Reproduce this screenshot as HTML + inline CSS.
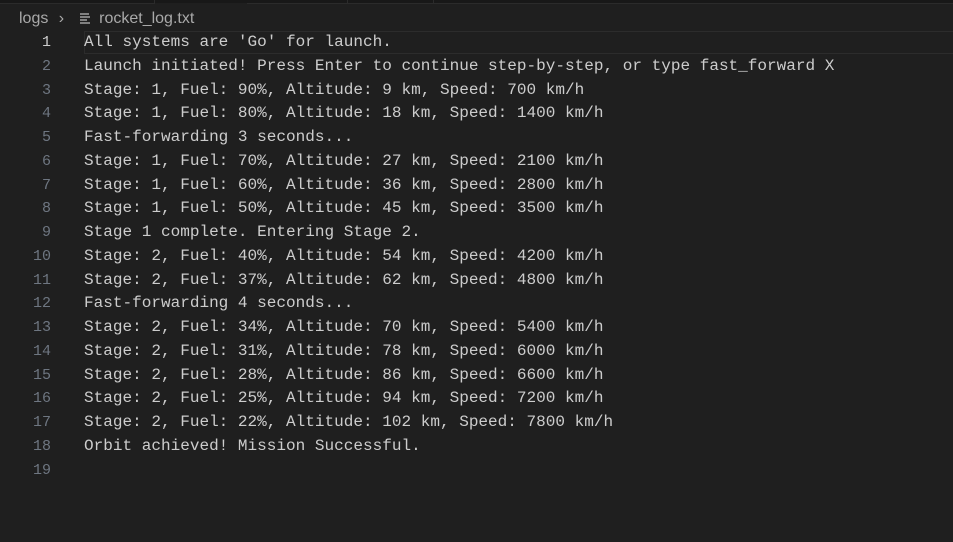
<!DOCTYPE html>
<html><head><style>
body{margin:0;width:953px;height:542px;background:#1f1f1f;overflow:hidden;position:relative;font-family:"Liberation Sans",sans-serif}
.top{position:absolute;left:0;top:0;width:953px;height:3px;background:#181818}
.tb{position:absolute;top:0;height:3px;border-right:1px solid #2b2b2b;border-bottom:1px solid #2b2b2b}
.crumb{position:absolute;top:10px;left:19px;font-size:16px;color:#a9a9a9;white-space:nowrap}
.hl{position:absolute;left:84px;top:31px;width:880px;height:23px;border:1px solid #2c2c2c;box-sizing:border-box}
.ln{position:absolute;left:0;width:51px;text-align:right;color:#6e7681;font-family:"Liberation Mono",monospace;font-size:15px}
.code{position:absolute;left:84px;color:#cccccc;font-family:"Liberation Mono",monospace;font-size:16.05px;white-space:pre}
</style></head><body>
<div class="top"></div>
<div class="tb" style="left:0;width:154px"></div>
<div class="tb" style="left:247px;width:100px"></div>
<div class="tb" style="left:348px;width:85px"></div>
<div class="tb" style="left:434px;width:519px"></div>
<div class="crumb">logs <span style="color:#a9a9a9;margin:0 15px 0 6px">&#x203A;</span><svg width="12" height="12" viewBox="0 0 12 12" style="vertical-align:-1px;margin-right:8px"><path d="M1 2h9M1 5h10M1 8h7M1 11h10" stroke="#bbb" stroke-width="1.2"/></svg>rocket_log.txt</div>
<div class="hl"></div>
<div id="c"></div>
<script>
var L=["All systems are 'Go' for launch.","Launch initiated! Press Enter to continue step-by-step, or type fast_forward X","Stage: 1, Fuel: 90%, Altitude: 9 km, Speed: 700 km/h","Stage: 1, Fuel: 80%, Altitude: 18 km, Speed: 1400 km/h","Fast-forwarding 3 seconds...","Stage: 1, Fuel: 70%, Altitude: 27 km, Speed: 2100 km/h","Stage: 1, Fuel: 60%, Altitude: 36 km, Speed: 2800 km/h","Stage: 1, Fuel: 50%, Altitude: 45 km, Speed: 3500 km/h","Stage 1 complete. Entering Stage 2.","Stage: 2, Fuel: 40%, Altitude: 54 km, Speed: 4200 km/h","Stage: 2, Fuel: 37%, Altitude: 62 km, Speed: 4800 km/h","Fast-forwarding 4 seconds...","Stage: 2, Fuel: 34%, Altitude: 70 km, Speed: 5400 km/h","Stage: 2, Fuel: 31%, Altitude: 78 km, Speed: 6000 km/h","Stage: 2, Fuel: 28%, Altitude: 86 km, Speed: 6600 km/h","Stage: 2, Fuel: 25%, Altitude: 94 km, Speed: 7200 km/h","Stage: 2, Fuel: 22%, Altitude: 102 km, Speed: 7800 km/h","Orbit achieved! Mission Successful.",""];
var h="";
for(var i=0;i<L.length;i++){var y=33+i*23.76;
h+='<div class="ln" style="top:'+(y+1)+'px;'+(i==0?'color:#ccc':'')+'">'+(i+1)+'</div>';
h+='<div class="code" style="top:'+y+'px">'+L[i].replace(/&/g,'&amp;').replace(/</g,'&lt;')+'</div>';}
document.getElementById('c').innerHTML=h;
</script>
</body></html>
